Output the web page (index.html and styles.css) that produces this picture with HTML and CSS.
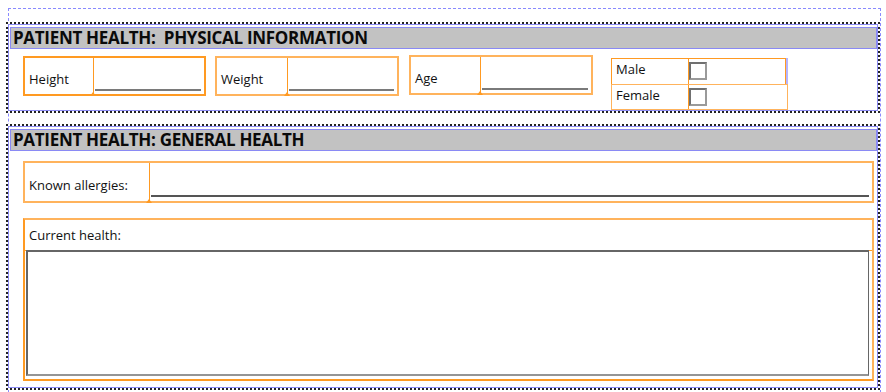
FILE: index.html
```html
<!DOCTYPE html>
<html lang="en">
<head>
    <meta charset="UTF-8">
    <title>Patient Health Form</title>
    <link rel="stylesheet" href="styles.css">
</head>
<body>

<div class="page">
    <section class="subform physical">
        <h2 class="section-title">PATIENT HEALTH:&nbsp; PHYSICAL INFORMATION</h2>
        <div class="field-row">
            <div class="field field-height">
                <label class="caption">Height</label>
                <div class="value"><span class="line"></span></div>
            </div>
            <div class="field field-weight">
                <label class="caption">Weight</label>
                <div class="value"><span class="line"></span></div>
            </div>
            <div class="field field-age">
                <label class="caption">Age</label>
                <div class="value"><span class="line"></span></div>
            </div>
            <div class="gender">
                <div class="check-row male">
                    <label class="check-caption">Male</label>
                    <div class="check-cell"><span class="box"></span></div>
                </div>
                <div class="check-row female">
                    <label class="check-caption">Female</label>
                    <div class="check-cell"><span class="box"></span></div>
                </div>
            </div>
        </div>
    </section>

    <section class="subform general">
        <h2 class="section-title">PATIENT HEALTH: GENERAL HEALTH</h2>
        <div class="field field-allergies">
            <label class="caption">Known allergies:</label>
            <div class="value"><span class="line"></span></div>
        </div>
        <div class="field-block">
            <label class="block-caption">Current health:</label>
            <div class="text-area"></div>
        </div>
    </section>
</div>

</body>
</html>
```

FILE: styles.css
```css
body {
    margin: 0;
    padding: 0;
    background-color: white;
    font-family: "Open Sans", "Noto Sans", sans-serif;
    color: #111;
}
.page {
    margin: 8px 0 0 8px;
    width: 873px;
    height: 390px;
    border-top: 1px dashed #8a8aff;
    border-left: 1px dashed #8a8aff;
    border-right: 1px dashed #8a8aff;
    box-sizing: border-box;
    padding-top: 13px;
}
.subform {
    margin-left: -3px;
    width: 874px;
    border: 2px dotted #222;
    box-shadow: inset 0 0 0 1px #8c8cf5;
    box-sizing: border-box;
    padding: 3px 1px 0 2px;
    background: white;
}
.physical {
    height: 91px;
}
.general {
    margin-top: 11px;
    height: 266px;
}
.section-title {
    margin: 0;
    height: 22px;
    box-sizing: border-box;
    background-color: #c2c2c2;
    border: 1px solid #8a8af5;
    font-size: 17px;
    font-weight: bold;
    line-height: 20px;
    padding-left: 2px;
    letter-spacing: -0.3px;
    color: #0a0a0a;
}
.field-row {
    display: flex;
    align-items: flex-start;
    margin-top: 6px;
    padding-left: 13px;
}
.field {
    display: flex;
    border: 2px solid #ffb35c;
    box-sizing: border-box;
    height: 40px;
}
.field-height {
    width: 183px;
    border-color: #ff9a22;
    margin-top: 1px;
}
.field-weight {
    width: 184px;
    margin-left: 9px;
    margin-top: 1px;
}
.field-age {
    width: 184px;
    margin-left: 10px;
}
.caption {
    font-size: 13px;
    padding: 12px 0 0 4px;
    box-sizing: border-box;
}
.field-height .caption { width: 68px; }
.field-weight .caption { width: 70px; }
.field-age .caption { width: 69px; }
.value {
    flex: 1;
    position: relative;
    border-left: 1px solid #ff9a22;
}
.value::after {
    content: "";
    position: absolute;
    left: -4px;
    bottom: -2px;
    border-left: 3px solid transparent;
    border-right: 3px solid transparent;
    border-bottom: 4px solid #ff9a22;
}
.line {
    display: block;
    margin: 31px 3px 0 1px;
    height: 2px;
    background-color: #7a7a7a;
}
.gender {
    margin-left: 18px;
    margin-top: 3px;
    width: 177px;
}
.check-row {
    display: flex;
    height: 27px;
    border: 1px solid #ff9a22;
    box-sizing: border-box;
}
.male {
    width: 175px;
    box-shadow: 2px 0 0 #b4b4ff;
}
.female {
    margin-top: -1px;
    height: 26px;
    border-color: #ffb35c;
}
.check-caption {
    width: 76px;
    font-size: 13px;
    padding: 1px 0 0 4px;
    box-sizing: border-box;
}
.check-cell {
    flex: 1;
    border-left: 1px solid #ff9a22;
}
.box {
    display: block;
    width: 18px;
    height: 18px;
    margin: 3px 0 0 0;
    box-sizing: border-box;
    border: 2px solid #707070;
    border-right-color: #9a9a9a;
    border-bottom-color: #9a9a9a;
}
.field-allergies {
    margin: 10px 0 0 13px;
    width: 851px;
    height: 42px;
}
.field-allergies .caption {
    width: 124px;
    padding-top: 13px;
}
.field-allergies .line {
    margin: 32px 3px 0 1px;
    background-color: #555;
}
.field-block {
    margin: 15px 0 0 13px;
    width: 851px;
    height: 163px;
    border: 2px solid #ffb35c;
    border-left-color: #ff9a22;
    border-bottom-color: #ff9a22;
    box-sizing: border-box;
}
.block-caption {
    display: block;
    height: 31px;
    font-size: 13px;
    padding: 6px 0 0 4px;
    box-sizing: border-box;
    border-bottom: 1px solid #ff9a22;
}
.text-area {
    margin: -1px 3px 0 1px;
    height: 126px;
    box-sizing: border-box;
    border: 2px solid #666;
    border-bottom-color: #959595;
    border-right-width: 1px;
}
```
